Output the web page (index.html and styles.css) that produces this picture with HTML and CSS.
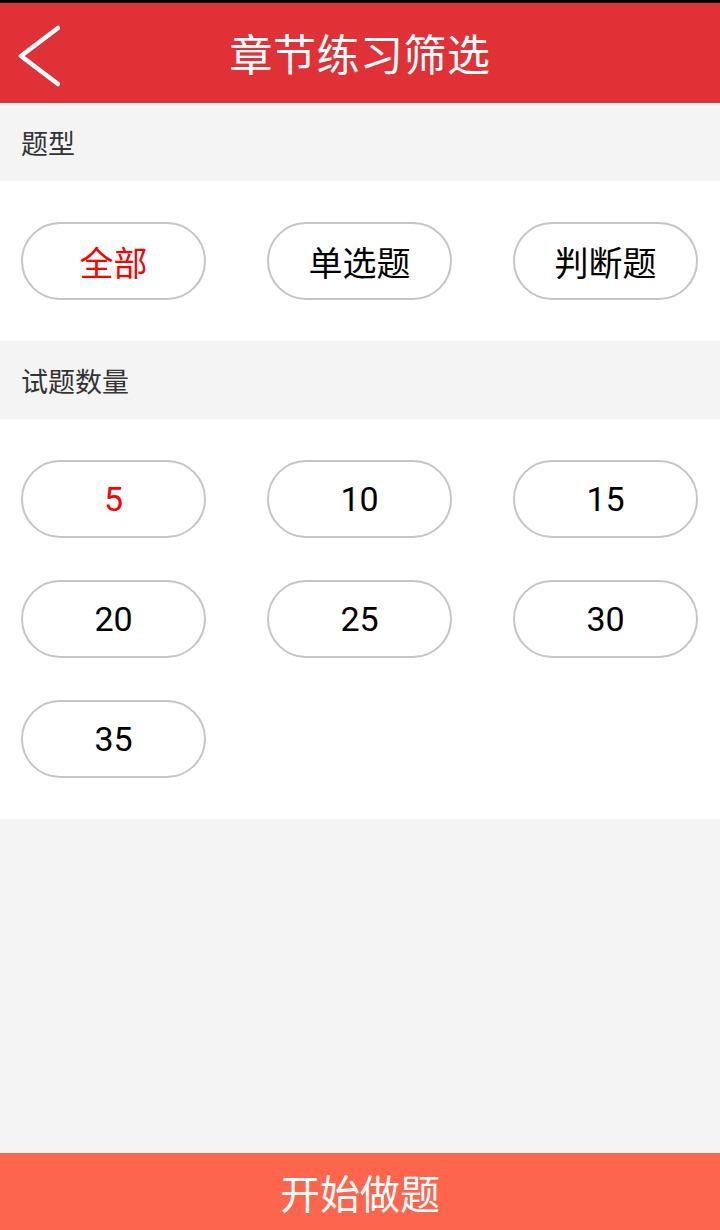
FILE: index.html
```html
<!DOCTYPE html>
<html lang="zh">
<head>
<meta charset="utf-8">
<title>章节练习筛选</title>
<link rel="stylesheet" href="styles.css">
</head>
<body>
<div class="app">
  <div class="statusbar"></div>
  <header class="header">
    <svg class="back" width="60" height="100" viewBox="0 0 60 100">
      <polyline points="58,25 21,53 58,81" fill="none" stroke="#fff" stroke-width="4.5" stroke-linecap="round" stroke-linejoin="round"/>
    </svg>
    <h1 class="title">章节练习筛选</h1>
  </header>
  <div class="section-label">题型</div>
  <div class="options">
    <div class="pill active">全部</div>
    <div class="pill">单选题</div>
    <div class="pill">判断题</div>
  </div>
  <div class="section-label">试题数量</div>
  <div class="options">
    <div class="pill num active">5</div>
    <div class="pill num">10</div>
    <div class="pill num">15</div>
    <div class="pill num">20</div>
    <div class="pill num">25</div>
    <div class="pill num">30</div>
    <div class="pill num">35</div>
  </div>
  <div class="spacer"></div>
  <div class="start">开始做题</div>
</div>
</body>
</html>
```
FILE: styles.css
```css
* { box-sizing: border-box; }
html, body {
  margin: 0;
  padding: 0;
  background: #f4f4f4;
}
body {
  font-family: "Noto Sans CJK SC", "Roboto", sans-serif;
}
.app {
  width: 720px;
  height: 1230px;
  display: flex;
  flex-direction: column;
  background: #f4f4f4;
}
.statusbar {
  height: 3px;
  background: #000;
}
.header {
  height: 100px;
  background: #e03236;
  position: relative;
  display: flex;
  align-items: center;
  justify-content: center;
}
.back {
  position: absolute;
  left: 0;
  top: 0;
}
.title {
  margin: 0;
  color: #fff;
  font-size: 43px;
  font-weight: normal;
  line-height: 1;
  letter-spacing: 0.5px;
  transform: translateY(-1px);
}
.section-label {
  height: 78px;
  padding-left: 21px;
  display: flex;
  align-items: center;
  font-size: 27px;
  color: #333;
}
.options {
  background: #fff;
  padding: 41px 23px 41px 21px;
  display: grid;
  grid-template-columns: repeat(3, 185px);
  column-gap: 61px;
  row-gap: 42px;
}
.pill {
  height: 78px;
  border: 2px solid #c6c6c6;
  border-radius: 40px;
  display: flex;
  align-items: center;
  justify-content: center;
  font-size: 34px;
  color: #000;
  background: #fff;
}
.pill.num {
  font-family: "Roboto", "Noto Sans CJK SC", sans-serif;
}
.pill.active {
  color: #f00;
}
.spacer {
  flex: 1;
}
.start {
  height: 77px;
  background: #fd654d;
  color: #fff;
  font-size: 40px;
  display: flex;
  align-items: center;
  justify-content: center;
}
```
